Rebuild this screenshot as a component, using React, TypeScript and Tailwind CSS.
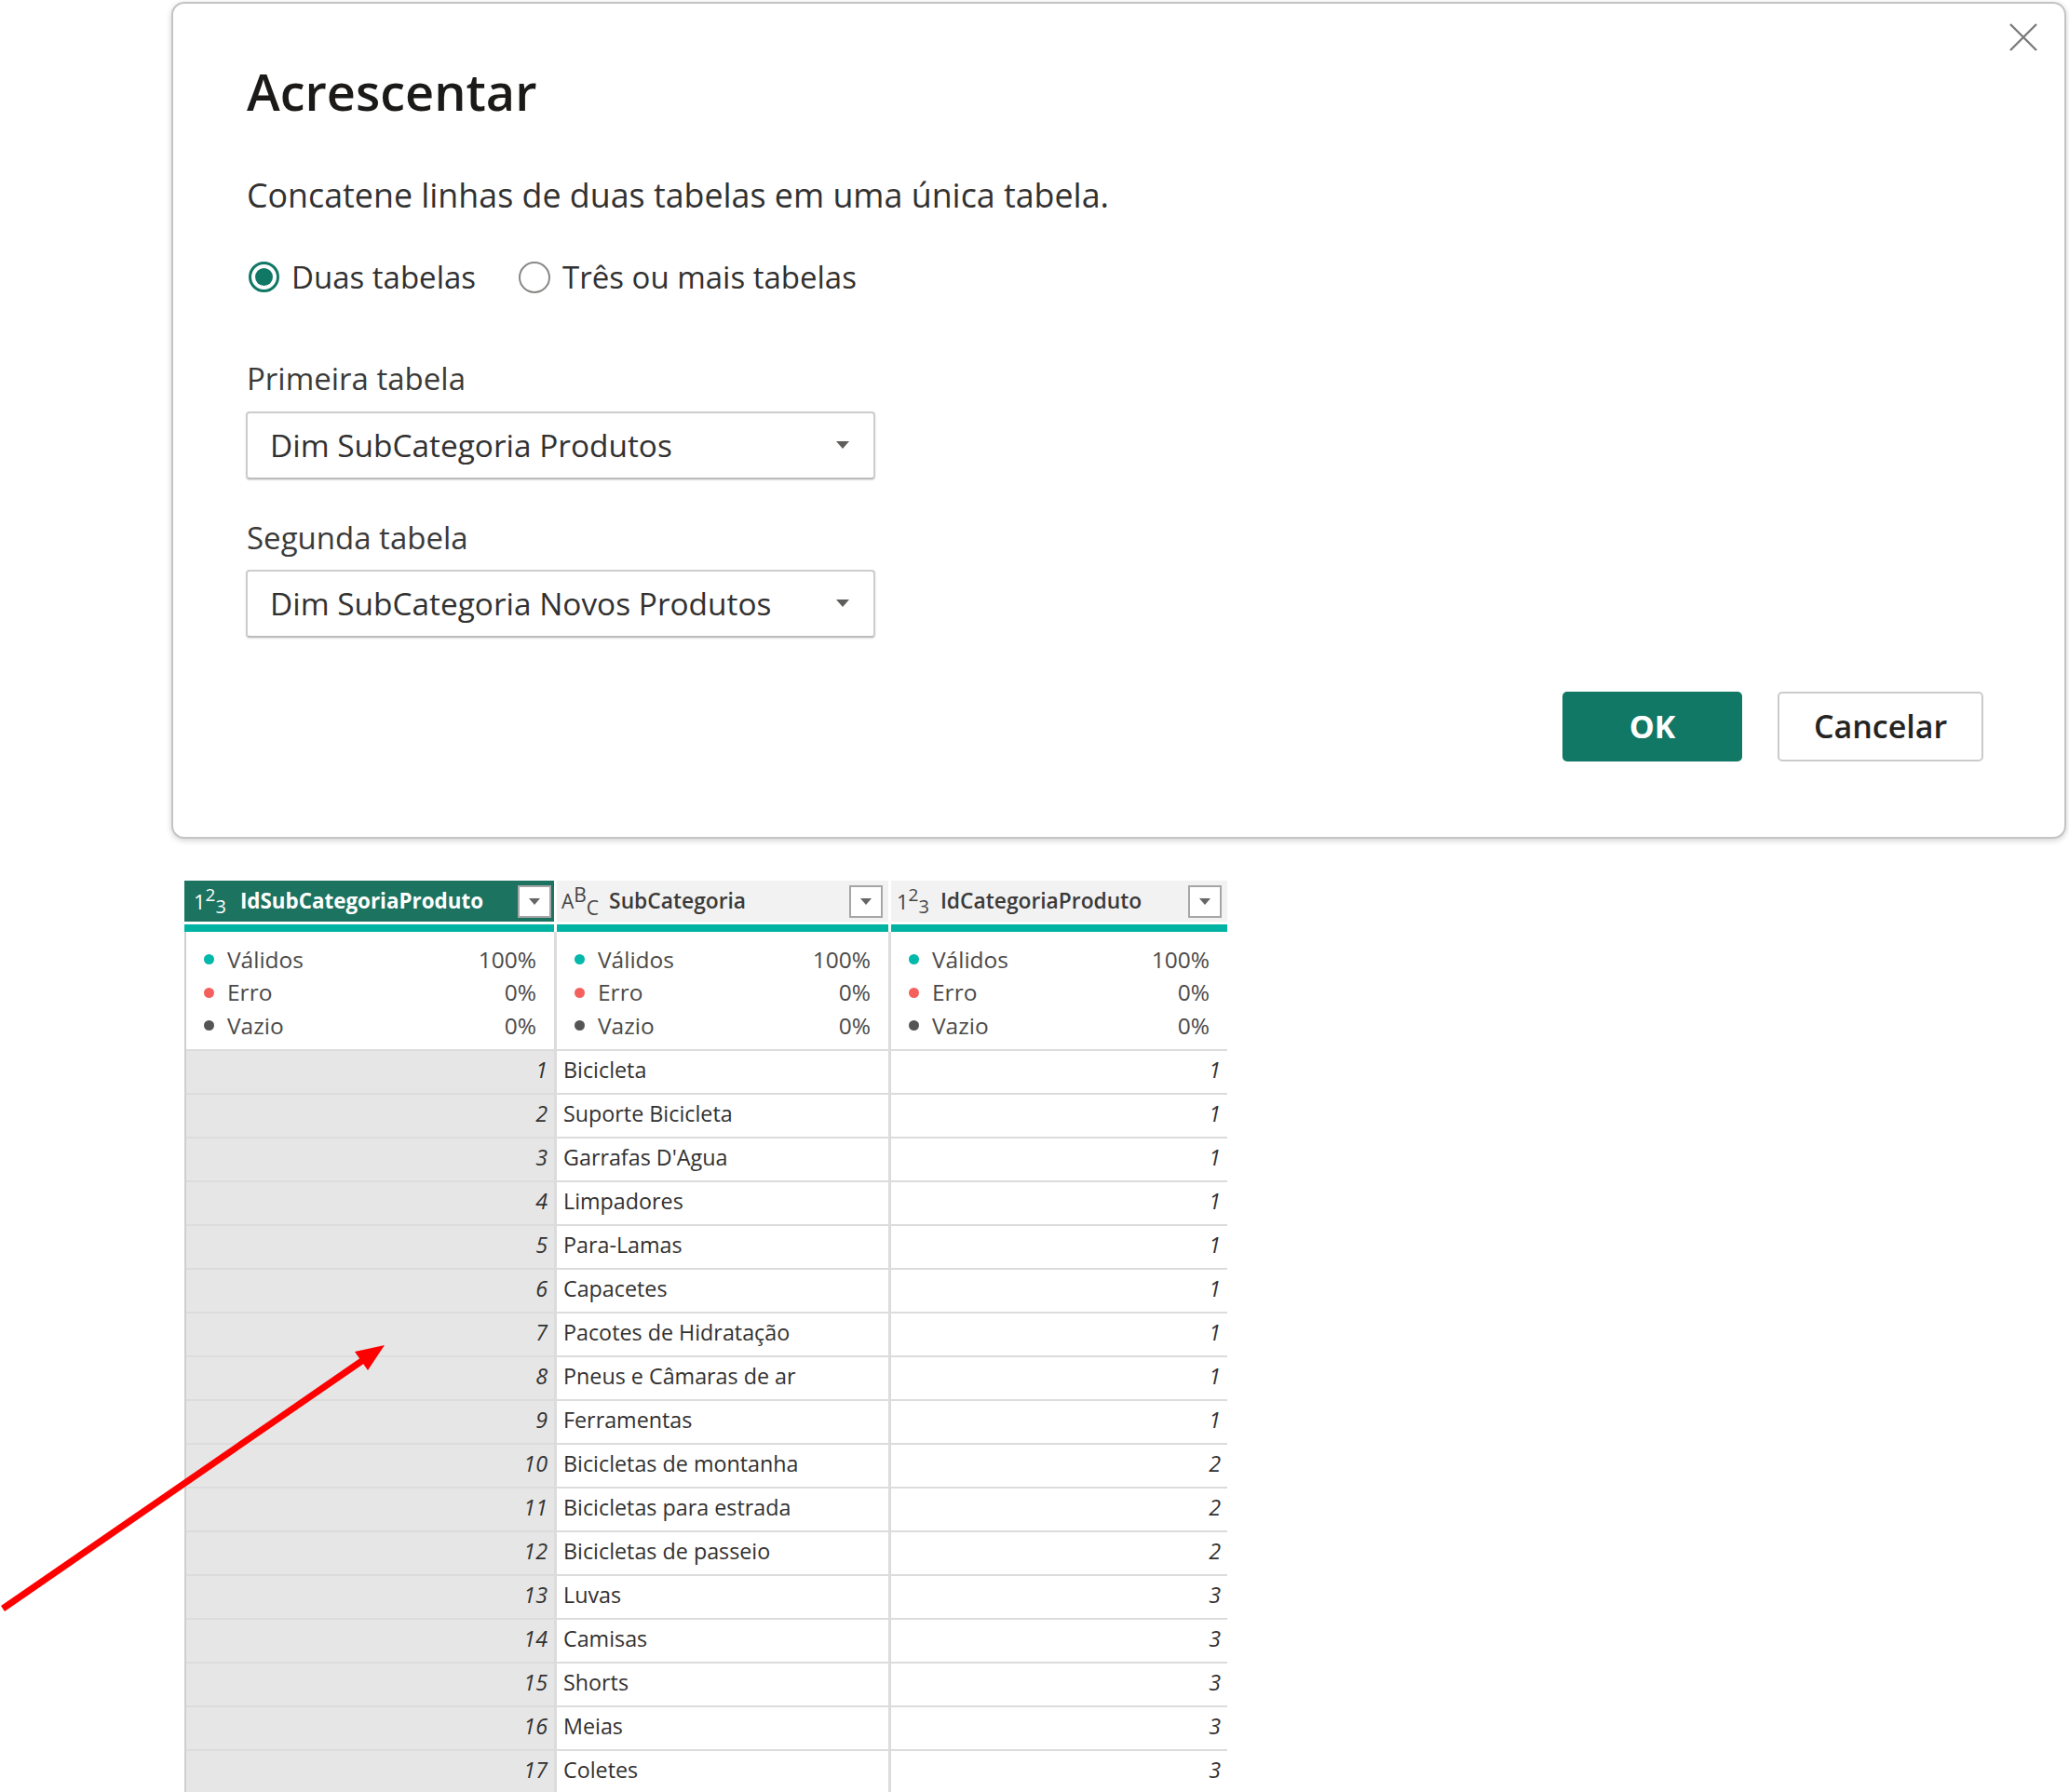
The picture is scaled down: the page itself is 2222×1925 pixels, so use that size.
import React from 'react';

const rows: [number, string, number][] = [
  [1, 'Bicicleta', 1],
  [2, 'Suporte Bicicleta', 1],
  [3, "Garrafas D'Agua", 1],
  [4, 'Limpadores', 1],
  [5, 'Para-Lamas', 1],
  [6, 'Capacetes', 1],
  [7, 'Pacotes de Hidratação', 1],
  [8, 'Pneus e Câmaras de ar', 1],
  [9, 'Ferramentas', 1],
  [10, 'Bicicletas de montanha', 2],
  [11, 'Bicicletas para estrada', 2],
  [12, 'Bicicletas de passeio', 2],
  [13, 'Luvas', 3],
  [14, 'Camisas', 3],
  [15, 'Shorts', 3],
  [16, 'Meias', 3],
  [17, 'Coletes', 3],
];

function Caret() {
  return (
    <svg width="14" height="8" viewBox="0 0 14 8">
      <path d="M0 0 L14 0 L7 8 Z" fill="#605e5c" />
    </svg>
  );
}

function Select({ value }: { value: string }) {
  return (
    <div className="flex h-[73px] w-[676px] -ml-[1px] items-center justify-between rounded-[4px] border-2 border-[#cdcdcd] border-b-[#bcbcbc] bg-white pl-[24px] pr-[26px] shadow-[0_1px_2px_rgba(0,0,0,0.12)]">
      <span className="text-[33.4px] leading-none text-[#323130]">{value}</span>
      <Caret />
    </div>
  );
}

function FilterBtn() {
  return (
    <div className="flex h-[35px] w-[36px] items-center justify-center border-2 border-[#a6a6a6] bg-white">
      <svg width="12" height="7" viewBox="0 0 12 7">
        <path d="M0 0 L12 0 L6 7 Z" fill="#666" />
      </svg>
    </div>
  );
}

function NumIcon({ light }: { light?: boolean }) {
  return (
    <span className={`flex items-center text-[22px] leading-none ${light ? 'text-white' : 'text-[#444]'}`}>
      <span>1</span>
      <span className="-translate-y-[7px] text-[19px]">2</span>
      <span className="translate-y-[6px] text-[20px]">3</span>
    </span>
  );
}

function TextIcon() {
  return (
    <span className="flex items-center text-[21px] leading-none text-[#444]">
      <span>A</span>
      <span className="-translate-y-[7px]">B</span>
      <span className="translate-y-[7px]">C</span>
    </span>
  );
}

function Stats() {
  const items: [string, string, string][] = [
    ['Válidos', '100%', 'bg-[#01b8aa]'],
    ['Erro', '0%', 'bg-[#f4605d]'],
    ['Vazio', '0%', 'bg-[#555555]'],
  ];
  return (
    <div className="flex h-[126px] flex-col bg-white pl-[19px] pr-[19px] pt-[12px]">
      {items.map(([label, pct, dot]) => (
        <div key={label} className="flex h-[35.5px] items-center justify-between text-[24.5px] leading-none text-[#4b4a49]">
          <span className="flex items-center gap-[14px]">
            <span className={`h-[11px] w-[11px] shrink-0 rounded-full ${dot}`} />
            {label}
          </span>
          <span>{pct}</span>
        </div>
      ))}
    </div>
  );
}

export default function App() {
  return (
    <div className="relative h-[1925px] w-full overflow-hidden bg-white font-['Open_Sans','Noto_Sans',sans-serif]">
      {/* dialog */}
      <div className="ml-[184px] mt-[2px] flex h-[899px] w-[2035px] flex-col rounded-[14px] border-2 border-[#c4c4c4] bg-white shadow-[0_2px_6px_rgba(0,0,0,0.18)]">
        <div className="flex items-start justify-between pl-[79px] pr-[28px]">
          <h1 className="mt-[67px] text-[54px] font-semibold leading-none text-[#1b1a19]">Acrescentar</h1>
          <button className="mt-[20px] flex h-[32px] w-[32px] items-center justify-center">
            <svg width="32" height="32" viewBox="0 0 32 32">
              <path d="M2 2 L30 30 M30 2 L2 30" stroke="#7b7b7b" strokeWidth="2.4" />
            </svg>
          </button>
        </div>

        <div className="flex flex-col pl-[79px]">
          <p className="mt-[67px] text-[35.8px] leading-none text-[#323130]">
            Concatene linhas de duas tabelas em uma única tabela.
          </p>

          <div className="mt-[53px] flex h-[34px] items-center text-[33px] leading-none text-[#323130]">
            <span className="ml-[2px] flex h-[33px] w-[33px] items-center justify-center rounded-full border-[3px] border-[#117865] bg-white">
              <span className="h-[19px] w-[19px] rounded-full bg-[#117865]" />
            </span>
            <span className="ml-[13px]">Duas tabelas</span>
            <span className="ml-[46px] h-[34px] w-[34px] rounded-full border-2 border-[#8a8886] bg-white" />
            <span className="ml-[13px]">Três ou mais tabelas</span>
          </div>

          <label className="mt-[75px] text-[33px] leading-none text-[#3b3a39]">Primeira tabela</label>
          <div className="mt-[19px]">
            <Select value="Dim SubCategoria Produtos" />
          </div>

          <label className="mt-[46px] text-[33px] leading-none text-[#3b3a39]">Segunda tabela</label>
          <div className="mt-[18px]">
            <Select value="Dim SubCategoria Novos Produtos" />
          </div>
        </div>

        <div className="mt-[58px] flex justify-end gap-[38px] pr-[87px]">
          <button className="flex h-[75px] w-[193px] items-center justify-center rounded-[5px] bg-[#117865] text-[34px] font-bold leading-none text-white">
            OK
          </button>
          <button className="flex h-[75px] w-[221px] items-center justify-center rounded-[5px] border-2 border-[#cbcbcb] bg-white text-[34px] font-semibold leading-none text-[#252423]">
            Cancelar
          </button>
        </div>
      </div>

      {/* table preview */}
      <div className="ml-[198px] mt-[45px] w-[1120px]">
        <div className="grid h-[44px] grid-cols-[397px_356px_361px] gap-x-[3px] bg-white">
          <div className="flex items-center bg-[#1c735f] pl-[10px] pr-[3px]">
            <NumIcon light />
            <span className="ml-[15px] flex-1 text-[22.4px] font-bold leading-none text-white">IdSubCategoriaProduto</span>
            <FilterBtn />
          </div>
          <div className="flex items-center bg-[#f2f2f2] pl-[5px] pr-[6px]">
            <TextIcon />
            <span className="ml-[11px] flex-1 text-[22.8px] font-semibold leading-none text-[#3b3a39]">SubCategoria</span>
            <FilterBtn />
          </div>
          <div className="flex items-center bg-[#f2f2f2] pl-[6px] pr-[6px]">
            <NumIcon />
            <span className="ml-[12px] flex-1 text-[22.8px] font-semibold leading-none text-[#3b3a39]">IdCategoriaProduto</span>
            <FilterBtn />
          </div>
        </div>
        <div className="mt-[3px] grid h-[8px] grid-cols-[397px_356px_361px] gap-x-[3px] bg-white">
          <div className="bg-[#01b3a2]" />
          <div className="bg-[#01b3a2]" />
          <div className="bg-[#01b3a2]" />
        </div>
        <div className="grid grid-cols-[395px_356px_361px] gap-x-[3px] gap-y-[2px] border-l-2 border-[#cfcfcf] bg-[#dcdcdc]">
          <Stats />
          <Stats />
          <Stats />
          {rows.map(([id, name, cat]) => (
            <React.Fragment key={id}>
              <div className="flex h-[45px] items-center justify-end bg-[#e6e6e6] pb-[3px] pr-[7px] text-[23.3px] italic leading-none text-[#323130]">
                {id}
              </div>
              <div className="flex h-[45px] items-center bg-white pb-[3px] pl-[7px] text-[23.3px] leading-none text-[#323130]">
                {name}
              </div>
              <div className="flex h-[45px] items-center justify-end bg-white pb-[3px] pr-[7px] text-[23.3px] italic leading-none text-[#323130]">
                {cat}
              </div>
            </React.Fragment>
          ))}
        </div>
      </div>

      {/* annotation arrow */}
      <svg className="pointer-events-none absolute left-0 top-0" width="2222" height="1925">
        <line x1="3" y1="1728" x2="390" y2="1461" stroke="#ff0000" strokeWidth="7" />
        <polygon points="413,1445 395,1472 381,1452" fill="#ff0000" />
      </svg>
    </div>
  );
}
